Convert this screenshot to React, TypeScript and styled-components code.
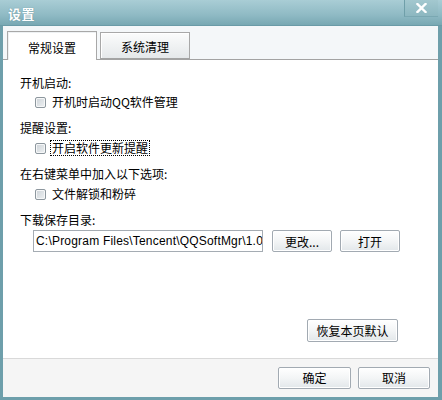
import React from "react";
import styled, { createGlobalStyle } from "styled-components";

const Global = createGlobalStyle`
  html, body { margin: 0; padding: 0; background: #ffffff; }
  body { font-family: "Noto Sans CJK SC", "Liberation Sans", sans-serif; font-size: 12px; color: #000; }
  * { box-sizing: border-box; }
`;

const Window = styled.div`
  width: 442px;
  height: 400px;
  display: flex;
  flex-direction: column;
  background: #6e9fab;
`;

const TitleBar = styled.div`
  height: 26px;
  display: flex;
  align-items: flex-start;
  justify-content: space-between;
  background: linear-gradient(#a9cdd5, #8fbac4 60%, #78a8b3);
  border-bottom: 1px solid #6a9ba7;
`;

const Title = styled.div`
  padding: 6px 0 0 8px;
  color: #ffffff;
  font-weight: bold;
  font-size: 13px;
  line-height: 16px;
  letter-spacing: 0.5px;
  text-shadow: 0 0 1px rgba(40, 80, 90, 0.5);
`;

const CloseButton = styled.div`
  width: 34px;
  height: 17px;
  margin-right: 4px;
  display: flex;
  align-items: center;
  justify-content: center;
  background: linear-gradient(#a3c8cf, #8cb7c0);
  border-left: 1px solid #6f9fa9;
  border-bottom: 1px solid #7aa8b2;
`;

const Frame = styled.div`
  flex: 1;
  display: flex;
  padding: 0 4px 3px 3px;
  min-height: 0;
`;

const Body = styled.div`
  flex: 1;
  display: flex;
  flex-direction: column;
  background: #ffffff;
`;

const TabStrip = styled.div`
  height: 34px;
  display: flex;
  align-items: flex-end;
  gap: 3px;
  padding-left: 4px;
  background: #f4f7f9;
  border-bottom: 1px solid #a3a3a3;
`;

const Tab = styled.div<{ $active?: boolean }>`
  width: 90px;
  height: ${(p) => (p.$active ? "29px" : "27px")};
  margin-bottom: ${(p) => (p.$active ? "-1px" : "0")};
  position: relative;
  z-index: ${(p) => (p.$active ? 1 : 0)};
  display: flex;
  align-items: center;
  justify-content: center;
  padding-top: 2px;
  border: 1px solid #a8a8a8;
  border-bottom: ${(p) => (p.$active ? "none" : "1px solid #a3a3a3")};
  background: ${(p) => (p.$active ? "#ffffff" : "linear-gradient(#fbfcfc, #e5e8ea)")};
  box-shadow: ${(p) => (p.$active ? "inset 1px 1px 0 #eef1f3" : "inset 1px 1px 0 #ffffff")};
  font-size: 12px;
`;

const Content = styled.div`
  flex: 1;
  display: flex;
  flex-direction: column;
  gap: 10px;
  padding: 15px 0 16px 17px;
`;

const Section = styled.div<{ $gap: number }>`
  display: flex;
  flex-direction: column;
  gap: ${(p) => p.$gap}px;
`;

const Heading = styled.div`
  line-height: 16px;
  height: 16px;
`;

const Option = styled.label`
  display: flex;
  align-items: center;
  height: 16px;
  margin-left: 15px;
  gap: 5px;
`;

const Box = styled.span`
  width: 11px;
  height: 11px;
  border: 1px solid #8d979e;
  border-radius: 2px;
  background: linear-gradient(135deg, #cdd3d8, #eef1f3);
  box-shadow: inset 0 0 0 1px #f6f7f8;
`;

const OptionText = styled.span<{ $focused?: boolean }>`
  line-height: 14px;
  padding: 0 1px;
  outline: ${(p) => (p.$focused ? "1px dotted #000" : "none")};
  outline-offset: 0;
`;

const PathRow = styled.div`
  display: flex;
  align-items: center;
  margin-left: 13px;
  gap: 8px;
`;

const PathInput = styled.div`
  flex: 0 0 230px;
  height: 22px;
  margin-right: 1px;
  border: 1px solid #a5acb3;
  background: #ffffff;
  padding: 0 0 0 2px;
  font-family: "Liberation Sans", "DejaVu Sans", sans-serif;
  font-size: 12px;
  letter-spacing: 0.2px;
  line-height: 20px;
  white-space: nowrap;
  overflow: hidden;
`;

const Button = styled.div<{ $w: number; $h?: number }>`
  flex: 0 0 ${(p) => p.$w}px;
  width: ${(p) => p.$w}px;
  height: ${(p) => p.$h ?? 22}px;
  display: flex;
  align-items: center;
  justify-content: center;
  border: 1px solid #a2aab2;
  border-radius: 2px;
  background: linear-gradient(#ffffff, #f3f5f6 50%, #e2e7ea);
  box-shadow: inset 0 0 0 1px #ffffff;
  font-size: 12px;
  white-space: nowrap;
`;

const RestoreRow = styled.div`
  margin-top: auto;
  display: flex;
  justify-content: flex-end;
  padding-right: 40px;
`;

const Footer = styled.div`
  height: 39px;
  display: flex;
  align-items: center;
  justify-content: flex-end;
  gap: 7px;
  padding: 0 8px 1px 0;
  background: #f5f5f5;
  border-top: 1px solid #d9d9d9;
`;

export default function App() {
  return (
    <>
      <Global />
      <Window>
        <TitleBar>
          <Title>设置</Title>
          <CloseButton>
            <svg width="11" height="10" viewBox="0 0 11 10">
              <path d="M1.5 1 L9.5 9 M9.5 1 L1.5 9" stroke="#ffffff" strokeWidth="2.4" strokeLinecap="square" />
            </svg>
          </CloseButton>
        </TitleBar>
        <Frame>
          <Body>
            <TabStrip>
              <Tab $active>常规设置</Tab>
              <Tab>系统清理</Tab>
            </TabStrip>
            <Content>
              <Section $gap={3}>
                <Heading>开机启动:</Heading>
                <Option>
                  <Box />
                  <OptionText>开机时启动QQ软件管理</OptionText>
                </Option>
              </Section>
              <Section $gap={4}>
                <Heading>提醒设置:</Heading>
                <Option>
                  <Box />
                  <OptionText $focused>开启软件更新提醒</OptionText>
                </Option>
              </Section>
              <Section $gap={4}>
                <Heading>在右键菜单中加入以下选项:</Heading>
                <Option>
                  <Box />
                  <OptionText>文件解锁和粉碎</OptionText>
                </Option>
              </Section>
              <Section $gap={2}>
                <Heading>下载保存目录:</Heading>
                <PathRow>
                  <PathInput>C:\Program Files\Tencent\QQSoftMgr\1.0.1</PathInput>
                  <Button $w={60}>更改...</Button>
                  <Button $w={60}>打开</Button>
                </PathRow>
              </Section>
              <RestoreRow>
                <Button $w={91} $h={23}>恢复本页默认</Button>
              </RestoreRow>
            </Content>
            <Footer>
              <Button $w={73}>确定</Button>
              <Button $w={72}>取消</Button>
            </Footer>
          </Body>
        </Frame>
      </Window>
    </>
  );
}
